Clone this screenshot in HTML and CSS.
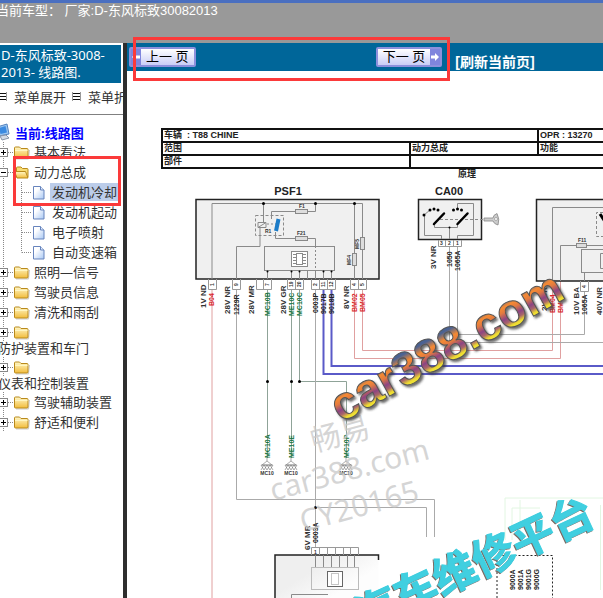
FILE: index.html
```html
<!DOCTYPE html>
<html lang="zh-CN">

<head>
  <meta charset="UTF-8">
  <meta name="viewport" content="width=device-width, initial-scale=1.0">
  <title>D-东风标致-3008-2013- 线路图</title>
  <link rel="stylesheet" href="styles.css">
</head>

<body>
  <!-- shared icons -->
  <svg class="defs" aria-hidden="true">
    <defs>
      <linearGradient id="gold" x1="0" y1="0" x2="0" y2="1">
        <stop offset="0" stop-color="#fff8c8" />
        <stop offset="1" stop-color="#f2bc3c" />
      </linearGradient>
      <linearGradient id="paper" x1="0" y1="0" x2="1" y2="1">
        <stop offset="0.3" stop-color="#ffffff" />
        <stop offset="1" stop-color="#a9c8f4" />
      </linearGradient>
    </defs>
    <symbol id="plus" viewBox="0 0 18 20">
      <path d="M7.500 0V20M12 10.500H18" fill="none" stroke="#888" stroke-dasharray="1 1" />
      <rect x="3.500" y="6.500" width="8" height="8" fill="#fff" stroke="#888" />
      <path d="M5 10.500H10M7.500 8V13" stroke="#000" />
    </symbol>
    <symbol id="minus" viewBox="0 0 18 20">
      <path d="M7.500 0V20M12 10.500H18" fill="none" stroke="#888" stroke-dasharray="1 1" />
      <rect x="3.500" y="6.500" width="8" height="8" fill="#fff" stroke="#888" />
      <path d="M5 10.500H10" stroke="#000" />
    </symbol>
    <symbol id="branch" viewBox="0 0 36 20">
      <path d="M7.500 0V20M25.500 0V20M26 10.500H36" fill="none" stroke="#888" stroke-dasharray="1 1" />
    </symbol>
    <symbol id="branch-end" viewBox="0 0 36 20">
      <path d="M7.500 0V20M25.500 0V10.500M26 10.500H36" fill="none" stroke="#888" stroke-dasharray="1 1" />
    </symbol>
    <symbol id="folder" viewBox="0 0 16 20">
      <path d="M2 17H14.500L15.500 8" fill="none" stroke="#ccc" />
      <path d="M.5 6Q.5 5 1.500 5H5.500L7 6.500H13Q14 6.500 14 7.500V15Q14 16 13 16H1.500Q.5 16 .5 15Z" fill="url(#gold)" stroke="#b98a1c" />
      <path d="M1 8.500H13.500" stroke="#fff6c0" />
    </symbol>
    <symbol id="folder-open" viewBox="0 0 16 20">
      <path d="M2.500 15V6Q2.500 5 3.500 5H7L8.500 6.500H13Q14 6.500 14 7.500V15Z" fill="#f7dc74" stroke="#b98a1c" />
      <path d="M.5 9.500H11.500L14 16H3Z" fill="url(#gold)" stroke="#b98a1c" />
    </symbol>
    <symbol id="page" viewBox="0 0 14 20">
      <path d="M1.500 4.500H8.500L12 8V17H1.500Z" fill="url(#paper)" stroke="#6784bd" />
      <path d="M8.500 4.500V8H12" fill="#dfe9fa" stroke="#6784bd" />
    </symbol>
    <symbol id="list" viewBox="0 0 9 9">
      <path d="M1 1.500H9M1 4.500H9M1 7.500H9" stroke="#111" />
      <path d="M.5 0V9M8.500 0V9" stroke="#999" />
    </symbol>
    <symbol id="ground" viewBox="0 0 14 14">
      <path d="M7 0V3L2 7H12L7 3" fill="none" stroke="#888" stroke-width=".7" />
      <path d="M1 7H13M1 12L4 7M4 12L7 7M7 12L10 7M10 12L13 7M1 7L4 12M4 7L7 12M7 7L10 12M10 7L13 12" stroke="#777" stroke-width=".6" />
    </symbol>
  </svg>

  <header class="topbar">当前车型： 厂家:<span>D-东风标致30082013</span></header>

  <div class="frames">
    <nav class="sidebar">
      <h1 class="side-title">D-东风标致-3008-2013- 线路图.</h1>
      <div class="side-tools">
        <button type="button"><svg class="list-icon"><use href="#list" /></svg>菜单展开</button>
        <button type="button"><svg class="list-icon"><use href="#list" /></svg>菜单折叠</button>
      </div>

      <div class="tree">
        <div class="current">
          <svg class="pc-icon" viewBox="0 0 14 18">
            <path d="M1 4L11 1L13 11L3 13Z" fill="#9cc6f0" stroke="#5683bd" />
            <path d="M3 5L9.500 3L11 9.500L4.500 11Z" fill="#3b8ae0" />
            <path d="M4 13L10 12L13 15L6 17Z" fill="#d5dbe5" stroke="#8794a8" />
          </svg>
          <a href="#">当前:线路图</a>
        </div>
        <ul>
          <li><svg class="joint"><use href="#plus" /></svg><svg class="folder"><use href="#folder" /></svg><a href="#">基本看法</a></li>
          <li><svg class="joint"><use href="#minus" /></svg><svg class="folder"><use href="#folder-open" /></svg><a href="#">动力总成</a></li>
          <li><svg class="branch"><use href="#branch" /></svg><svg class="page"><use href="#page" /></svg><a class="selected" href="#">发动机冷却</a></li>
          <li><svg class="branch"><use href="#branch" /></svg><svg class="page"><use href="#page" /></svg><a href="#">发动机起动</a></li>
          <li><svg class="branch"><use href="#branch" /></svg><svg class="page"><use href="#page" /></svg><a href="#">电子喷射</a></li>
          <li><svg class="branch"><use href="#branch-end" /></svg><svg class="page"><use href="#page" /></svg><a href="#">自动变速箱</a></li>
          <li><svg class="joint"><use href="#plus" /></svg><svg class="folder"><use href="#folder" /></svg><a href="#">照明—信号</a></li>
          <li><svg class="joint"><use href="#plus" /></svg><svg class="folder"><use href="#folder" /></svg><a href="#">驾驶员信息</a></li>
          <li><svg class="joint"><use href="#plus" /></svg><svg class="folder"><use href="#folder" /></svg><a href="#">清洗和雨刮</a></li>
          <li class="wrapped"><svg class="joint"><use href="#plus" /></svg><svg class="folder"><use href="#folder" /></svg><a href="#">防护装置和车门</a></li>
          <li class="wrapped"><svg class="joint"><use href="#plus" /></svg><svg class="folder"><use href="#folder" /></svg><a href="#">仪表和控制装置</a></li>
          <li><svg class="joint"><use href="#plus" /></svg><svg class="folder"><use href="#folder" /></svg><a href="#">驾驶辅助装置</a></li>
          <li><svg class="joint"><use href="#plus" /></svg><svg class="folder"><use href="#folder" /></svg><a href="#">舒适和便利</a></li>
        </ul>
      </div>
    </nav>

    <main class="content">
      <div class="toolbar">
        <button type="button" class="pager prev">
          <svg viewBox="0 0 10 16"><path d="M1 8L5 4V6.500H9V9.500H5V12Z" fill="#fff" /></svg>
          <span>上一 页</span>
        </button>
        <button type="button" class="pager next">
          <span>下一 页</span>
          <svg viewBox="0 0 10 16"><path d="M9 8L5 4V6.500H1V9.500H5V12Z" fill="#fff" /></svg>
        </button>
        <a class="refresh" href="#">[刷新当前页]</a>
      </div>

      <div class="sheet">
        <table class="info">
          <colgroup>
            <col class="col-a">
            <col class="col-b">
            <col>
          </colgroup>
          <tr>
            <td colspan="2">车辆 &nbsp;: T88 CHINE</td>
            <td>OPR : 13270</td>
          </tr>
          <tr>
            <td>范围</td>
            <td>动力总成</td>
            <td>功能</td>
          </tr>
          <tr>
            <td>部件</td>
            <td colspan="2"></td>
          </tr>
        </table>

        <!-- wiring diagram -->
        <svg class="diagram" width="476" height="429" viewBox="127 169 476 429" role="img" aria-label="原理">
          <defs>
            <linearGradient id="rainbow" gradientUnits="userSpaceOnUse" x1="0" y1="-35" x2="0" y2="1">
              <stop offset="0" stop-color="#3c5f9c" />
              <stop offset="0.15" stop-color="#4f6390" />
              <stop offset="0.35" stop-color="#f58a33" />
              <stop offset="0.48" stop-color="#e27a40" />
              <stop offset="0.66" stop-color="#8c4483" />
              <stop offset="0.78" stop-color="#a8656a" />
              <stop offset="0.9" stop-color="#eedc30" />
              <stop offset="1" stop-color="#f0e63a" />
            </linearGradient>
            <linearGradient id="fade" x1="0" y1="0" x2="1" y2="1">
              <stop offset="0.3" stop-color="#efefef" />
              <stop offset="0.6" stop-color="#fdfdfd" />
            </linearGradient>
            <filter id="shade" x="-10%" y="-30%" width="120%" height="160%">
              <feDropShadow dx="2" dy="2" stdDeviation="1" flood-color="#333" flood-opacity=".7" />
            </filter>
            <filter id="edge" x="-10%" y="-30%" width="120%" height="160%">
              <feDropShadow dx="-1" dy="1" stdDeviation=".5" flood-color="#6b5a50" flood-opacity=".9" />
            </filter>
          </defs>

          <text class="heading" x="467" y="177" text-anchor="middle">原理</text>

          <!-- wires -->
          <g class="wire red">
            <path d="M212 289V598M354.500 289V358.500H560.500V281M362.500 289V350.500H552.500V281" />
          </g>
          <g class="wire green">
            <path d="M267.500 289V458M291.500 289V458M299.500 289V381.500H346.500V458" />
          </g>
          <g class="wire">
            <path d="M236.500 289V499.500H434.500V537M315.500 289V548M315.500 507.500H426.500V537" />
            <path d="M449.500 246V342.500H603M457.500 246V334.500H584.500V291" />
          </g>
          <g class="wire blue">
            <path d="M323.500 289V374H603M331.500 289V366H603" />
          </g>
          <g class="wire faint">
            <path d="M600.500 505V590M512 508V540M520 500V545M512 508H540M505 498V540M505 498H603" />
          </g>

          <!-- PSF1 -->
          <text class="title" x="288" y="195" text-anchor="middle">PSF1</text>
          <rect class="unit" x="196" y="199.500" width="183" height="79.500" />
          <g class="line">
            <path d="M212 279V203.500H362.500V279M354.500 203.500V279M263.500 203.500V222M260 228V246.500H236.500V279" />
            <path d="M271.500 219V211.500H315.500V203.500M275.500 232V238.500H315.500V246M315.500 271V279" />
            <path d="M315.500 246V271M267 224H276" stroke-dasharray="2 2" />
            <path d="M267.500 271V279M291.500 271V279M299.500 271V279M307.500 271V279M323.500 271V279M331.500 271V279" />
            <rect x="255.500" y="215.500" width="28" height="20" stroke-dasharray="3 2" />
            <path d="M258 222.500H266V227.500H258ZM258 227.500L266 222.500" />
            <rect x="264.500" y="246.500" width="70" height="24" />
            <rect x="291.500" y="251.500" width="16" height="15" fill="#fff" />
            <rect x="296.500" y="253.500" width="6" height="11" />
            <path d="M293 254.500H296M293 257.500H296M293 260.500H296M293 263.500H296M303 254.500H306M303 257.500H306M303 260.500H306M303 263.500H306" />
          </g>
          <g class="fuse">
            <rect x="295.500" y="209.500" width="12" height="4" />
            <rect x="295.500" y="236.500" width="12" height="4" />
            <rect x="352.500" y="253.500" width="4" height="12" />
            <rect x="360.500" y="237.500" width="4" height="12" />
          </g>
          <path d="M278.500 219L276 231" stroke="#1c7cc8" stroke-width="4" />
          <g class="dot">
            <circle cx="263.500" cy="203.500" r="1.500" />
            <circle cx="315.500" cy="203.500" r="1.500" />
            <circle cx="354.500" cy="203.500" r="1.500" />
            <circle cx="267.500" cy="271.500" r="1" />
            <circle cx="291.500" cy="271.500" r="1" />
            <circle cx="299.500" cy="271.500" r="1" />
            <circle cx="323.500" cy="271.500" r="1" />
            <circle cx="331.500" cy="271.500" r="1" />
            <circle cx="267.500" cy="381.500" r="1.500" />
            <circle cx="291.500" cy="381.500" r="1.500" />
            <circle cx="299.500" cy="381.500" r="1.500" />
            <circle cx="315.500" cy="507.500" r="1.500" />
          </g>
          <g class="tiny">
            <text x="299" y="208">F1</text>
            <text x="265" y="233">R1</text>
            <text x="297" y="235">F21</text>
            <text transform="translate(351 265) rotate(-90)">MF4</text>
            <text transform="translate(359 249) rotate(-90)">MF5</text>
          </g>
          <g class="pin">
            <path d="M208.500 279V289.500H216.500V279M232.500 279V289.500H240.500V279M256.500 279V289.500H271.500V279M263.500 279V289.500M287.500 279V289.500H303.500V279M295.500 279V289.500M311.500 279V289.500H335.500V279M319.500 279V289.500M327.500 279V289.500M350.500 279V289.500H366.500V279M358.500 279V289.500" />
          </g>
          <g class="tiny">
            <text transform="translate(214 286) rotate(-90)">1</text>
            <text transform="translate(238 286) rotate(-90)">9</text>
            <text transform="translate(269 286) rotate(-90)">7</text>
            <text transform="translate(293 287) rotate(-90)">19</text>
            <text transform="translate(301 287) rotate(-90)">20</text>
            <text transform="translate(317 286) rotate(-90)">2</text>
            <text transform="translate(325 287) rotate(-90)">11</text>
            <text transform="translate(333 287) rotate(-90)">12</text>
            <text transform="translate(356 286) rotate(-90)">4</text>
            <text transform="translate(364 286) rotate(-90)">5</text>
          </g>
          <g class="connector">
            <text transform="translate(206 308) rotate(-90)">1V ND</text>
            <text transform="translate(230 314) rotate(-90)">28V NR</text>
            <text transform="translate(254 314) rotate(-90)">28V MR</text>
            <text transform="translate(286 314) rotate(-90)">28V GR</text>
            <text transform="translate(349 309) rotate(-90)">8V NR</text>
            <text transform="translate(436 269) rotate(-90)">3V NR</text>
            <text transform="translate(547 311) rotate(-90)">2V GR</text>
            <text transform="translate(579 315) rotate(-90)">10V BA</text>
            <text transform="translate(602 315) rotate(-90)">40V NR</text>
            <text transform="translate(310 550) rotate(-90)">6V MR</text>
          </g>
          <g class="tag">
            <text transform="translate(239 315) rotate(-90)">1229R</text>
            <text transform="translate(318 313) rotate(-90)">0003P</text>
            <text transform="translate(326 314) rotate(-90)">9017B</text>
            <text transform="translate(334 314) rotate(-90)">9018B</text>
            <text transform="translate(452 267) rotate(-90)">1050</text>
            <text transform="translate(460 271) rotate(-90)">1065A</text>
            <text transform="translate(587 315) rotate(-90)">1065A</text>
            <text transform="translate(318 543) rotate(-90)">0003A</text>
          </g>
          <g class="tag red">
            <text transform="translate(214 306) rotate(-90)">B04</text>
            <text transform="translate(357 312) rotate(-90)">BM02</text>
            <text transform="translate(365 312) rotate(-90)">BM05</text>
            <text transform="translate(555 313) rotate(-90)">BM04</text>
            <text transform="translate(563 313) rotate(-90)">BM03</text>
          </g>
          <g class="tag green">
            <text transform="translate(270 316) rotate(-90)">MC10B</text>
            <text transform="translate(294 316) rotate(-90)">ME10C</text>
            <text transform="translate(302 316) rotate(-90)">MC10C</text>
            <text transform="translate(270 458) rotate(-90)">MC10A</text>
            <text transform="translate(294 458) rotate(-90)">ME10E</text>
            <text transform="translate(349 458) rotate(-90)">MC10P</text>
          </g>

          <use href="#ground" x="260" y="458" width="14" height="14" />
          <use href="#ground" x="284" y="458" width="14" height="14" />
          <use href="#ground" x="339" y="458" width="14" height="14" />
          <g class="tiny" text-anchor="middle">
            <text x="267" y="475">MC10</text>
            <text x="291" y="475">MC10</text>
            <text x="346" y="475">MC10</text>
          </g>

          <!-- CA00 -->
          <text class="title" x="449" y="195" text-anchor="middle">CA00</text>
          <rect class="unit" x="418.500" y="199.500" width="63" height="40" />
          <g class="line">
            <path d="M424.500 215V235.500H441.500V239M434.500 224V227.500H457.500V224M449.500 227.500V239M457.500 208V203.500H473.500V235.500H457.500V239M424 215L430 210" />
            <path d="M440 219.500H493" stroke-dasharray="3 2" />
          </g>
          <path d="M434 224L444 213.500M457.500 224L467.500 213.500" stroke="#000" stroke-width="2.500" stroke-linecap="round" />
          <g class="dot">
            <circle cx="424" cy="215" r="1.500" />
            <circle cx="430" cy="210" r="1.500" />
            <circle cx="434" cy="209" r="1.500" />
            <circle cx="438" cy="210" r="1.500" />
            <circle cx="453.500" cy="210" r="1.500" />
            <circle cx="457.500" cy="209" r="1.500" />
            <circle cx="461.500" cy="210" r="1.500" />
            <circle cx="449.500" cy="227.500" r="1" />
          </g>
          <path d="M484 218H493Q493 215 497 213.500Q500 219 498 225Q494 224 493 221H484Z" fill="#ccc" stroke="#888" stroke-width=".8" />
          <circle cx="496" cy="219" r="1.500" fill="#fff" stroke="#888" stroke-width=".6" />
          <path class="pin" d="M438.500 240V246.500H461.500V240M445.500 240V246.500M453.500 240V246.500" />
          <g class="tiny">
            <text x="440" y="245">3</text>
            <text x="448" y="245">2</text>
            <text x="456" y="245">1</text>
          </g>

          <!-- right hand unit, runs off the sheet -->
          <rect class="unit" x="536.500" y="199.500" width="90" height="81.500" />
          <g class="line">
            <path d="M552.500 281V207.500H603M560.500 281V245.500H603M584.500 272V281" />
            <path d="M603 212.500H596.500V236.500H603" stroke-dasharray="3 2" />
            <rect x="581.500" y="249.500" width="40" height="23" />
            <path d="M603 253.500H600.500V268.500H603" />
          </g>
          <path d="M600 214L606 223" stroke="#000" stroke-width="3" />
          <rect class="fuse" x="576.500" y="243.500" width="10" height="4" />
          <path class="pin" d="M580.500 281V291.500H588.500V281" />
          <g class="tiny">
            <text x="578" y="242">F11</text>
            <text transform="translate(586 288) rotate(-90)">4</text>
          </g>

          <!-- lower unit -->
          <path d="M275 620V555H378.500V620Z" fill="url(#fade)" />
          <path d="M275 598V555H378.500V560" fill="none" stroke="#222" stroke-width="1.500" />
          <path class="pin" d="M311.500 555V547.500H358.500V555M319.500 547.500V555M327.500 547.500V555M335.500 547.500V555M343.500 547.500V555M350.500 547.500V555" />
          <g class="line">
            <path d="M315.500 555V567M323.500 555V567M331.500 555V567M339.500 555V567M347.500 555V567M354.500 555V567M291.500 598V594.500H328" />
            <rect x="311.500" y="567.500" width="47" height="22" stroke="#bbb" />
            <rect x="327.500" y="571.500" width="15" height="15" fill="#fff" stroke="#666" />
            <rect x="331.500" y="573.500" width="7" height="11" stroke-dasharray="1 1" />
          </g>
          <text class="tiny" x="314" y="554">1</text>

          <path d="M497 598V555.500H552.500V598" fill="none" stroke="#222" stroke-dasharray="2 2" />
          <g class="tag">
            <text transform="translate(515 590) rotate(-90)">9000A</text>
            <text transform="translate(523 590) rotate(-90)">9001A</text>
            <text transform="translate(531 590) rotate(-90)">9001G</text>
            <text transform="translate(539 590) rotate(-90)">9000G</text>
          </g>

          <!-- watermarks -->
          <g class="mark-grey">
            <text transform="translate(314 452) rotate(-15)">畅易</text>
            <text transform="translate(273 501) rotate(-15)">car388.com</text>
            <text transform="translate(303 532) rotate(-15)">CY20165</text>
          </g>
          <g filter="url(#shade)">
            <text class="mark-rainbow" transform="translate(341 423) rotate(-29)">car388.com</text>
          </g>
          <g filter="url(#edge)">
            <text class="mark-cyan" transform="translate(571 518) rotate(-25)" x="22" y="16" text-anchor="end">汽车维修平台</text>
          </g>
        </svg>
      </div>
    </main>
  </div>

  <div class="callout callout-pager"></div>
  <div class="callout callout-tree"></div>
</body>

</html>
```
FILE: styles.css
```css
:root {
  --bar-color: #006699;
  --grey: #999999;
  --text-color: #333333;
  --mark-red: #fb3a3a;
}

body {
  margin: 0;
  display: flex;
  flex-direction: column;
  height: 100vh;
  position: relative;
  overflow: hidden;
  background-color: #fff;
  color: var(--text-color);
  font-family: "Noto Sans", "Noto Sans CJK SC", sans-serif;
  font-size: 13px;
}

.defs {
  position: absolute;
  width: 0;
  height: 0;
}

a {
  color: inherit;
  text-decoration: none;
}

.topbar {
  box-sizing: border-box;
  flex: none;
  height: 43px;
  border-top: 3px solid #4a6fc0;
  background-color: var(--grey);
  color: #fff;
  font-family: "Liberation Sans", "Noto Sans CJK SC", sans-serif;
  line-height: 16px;
  text-indent: -4px;
  white-space: nowrap;
}

.frames {
  display: flex;
  flex: 1;
  min-height: 0;
}

/* left frame */
.sidebar {
  flex: none;
  width: 123px;
  overflow: hidden;
  border-right: 4px solid #2e2e2e;
}

.side-title {
  margin: 2px 2px 0 0;
  padding: 2px 0 2px 1px;
  background-color: var(--bar-color);
  color: #fff;
  font-size: 13px;
  font-weight: normal;
  line-height: 17px;
}

.side-tools {
  display: flex;
  gap: 6px;
  height: 31px;
  margin-left: -2px;
  border-bottom: 1px solid #808080;
}

.side-tools button {
  display: flex;
  flex: none;
  align-items: center;
  gap: 7px;
  height: 26px;
  padding: 0;
  border: none;
  background: none;
  color: inherit;
  font: inherit;
}

.list-icon {
  width: 9px;
  height: 9px;
}

.tree {
  margin: 7px 0 0 -4px;
  white-space: nowrap;
}

.current {
  display: flex;
  align-items: center;
  gap: 5px;
  height: 20px;
  color: #0000ff;
  font-weight: bold;
}

.pc-icon {
  width: 14px;
  height: 18px;
}

.tree ul {
  margin: 0;
  padding: 0;
  list-style: none;
}

.tree li {
  display: flex;
  align-items: center;
  height: 20px;
}

.tree svg {
  flex: none;
}

.joint {
  width: 18px;
  height: 20px;
}

.branch {
  width: 36px;
  height: 20px;
}

.folder {
  width: 16px;
  height: 20px;
}

.page {
  width: 14px;
  height: 20px;
  margin-right: 2px;
}

.tree li a {
  margin-left: 2px;
  padding: 0 2px;
  line-height: 18px;
}

.tree li a.selected {
  background-color: #bccdea;
}

.tree li.wrapped {
  flex-wrap: wrap;
  align-content: flex-start;
  height: 35px;
}

.tree li.wrapped svg {
  margin-bottom: -2px;
}

.tree li.wrapped a {
  width: 100%;
  margin-left: 0;
  line-height: 17px;
}

/* right frame */
.content {
  flex: 1;
  min-width: 0;
  overflow: hidden;
}

.toolbar {
  display: flex;
  align-items: center;
  height: 28px;
  padding-left: 2px;
  background-color: var(--bar-color);
}

.pager {
  display: flex;
  flex: none;
  height: 20px;
  padding: 0;
  border: 2px solid #8d90dc;
  border-radius: 2px;
  background: linear-gradient(#fff, #c9cdf6);
  color: #000;
  font-family: "Liberation Sans", "Noto Sans CJK SC", sans-serif;
  font-size: 13px;
  line-height: 16px;
}

.pager span {
  padding: 0 5px;
}

.pager svg {
  width: 10px;
  height: 16px;
  background-color: #7f85dd;
}

.next {
  margin-left: 180px;
}

.refresh {
  margin: 10px 0 0 13px;
  color: #fff;
  font-family: "Liberation Sans", "Noto Sans CJK SC", sans-serif;
  font-size: 14px;
  font-weight: bold;
  line-height: 16px;
  white-space: nowrap;
}

.info {
  width: calc(100% - 34px);
  margin: 57px 0 0 34px;
  border-collapse: collapse;
  table-layout: fixed;
  color: #222;
  font-family: "Liberation Sans", "Noto Sans CJK SC", sans-serif;
  font-size: 9px;
  font-weight: bold;
  line-height: 11px;
}

.col-a {
  width: 248px;
}

.col-b {
  width: 128px;
}

.info td {
  height: 11px;
  padding: 0 1px;
  border: 2px solid #111;
  border-right: none;
}

.diagram {
  display: block;
  font-family: "Liberation Sans", "Noto Sans CJK SC", sans-serif;
}

.heading {
  font-size: 9px;
  font-weight: bold;
  fill: #222;
}

.title {
  font-size: 11px;
  font-weight: bold;
  fill: #222;
}

.unit {
  fill: #f0f0f0;
  stroke: #222;
  stroke-width: 1.5;
}

.wire {
  fill: none;
  stroke: #aaa;
}

.wire.red {
  stroke: #e0a0a0;
}

.wire.green {
  stroke: #8fa398;
}

.wire.blue {
  stroke: #5a5ac8;
  stroke-width: 2;
}

.wire.faint {
  stroke: #e2f6e2;
}

.line {
  fill: none;
  stroke: #8a8a8a;
}

.fuse {
  fill: #ddd;
  stroke: #888;
}

.pin {
  fill: none;
  stroke: #999;
}

.tiny {
  font-size: 5px;
  font-weight: bold;
  fill: #333;
}

.connector {
  font-size: 8px;
  font-weight: bold;
  fill: #333;
}

.tag {
  font-size: 7px;
  font-weight: bold;
  fill: #222;
}

.tag.red {
  fill: #d8262c;
}

.tag.green {
  fill: #14713c;
}

.mark-grey {
  font-family: "Noto Sans", "Noto Sans CJK SC", sans-serif;
  font-size: 30px;
  fill: #c8c8c8;
  fill-opacity: 0.75;
}

.mark-rainbow {
  font-size: 47px;
  font-weight: bold;
  fill: url(#rainbow);
  stroke: #555;
  stroke-width: 1;
}

.mark-cyan {
  font-family: "Noto Sans CJK SC", sans-serif;
  font-size: 43px;
  font-weight: bold;
  fill: #3fcfe0;
  stroke: #3fcfe0;
  stroke-width: 1;
}

/* red frames drawn over the page */
.callout {
  position: absolute;
  box-sizing: border-box;
  border: 3px solid var(--mark-red);
  pointer-events: none;
}

.callout-pager {
  left: 133px;
  top: 37px;
  width: 317px;
  height: 44px;
}

.callout-tree {
  left: 13px;
  top: 156px;
  width: 108px;
  height: 50px;
}
```
